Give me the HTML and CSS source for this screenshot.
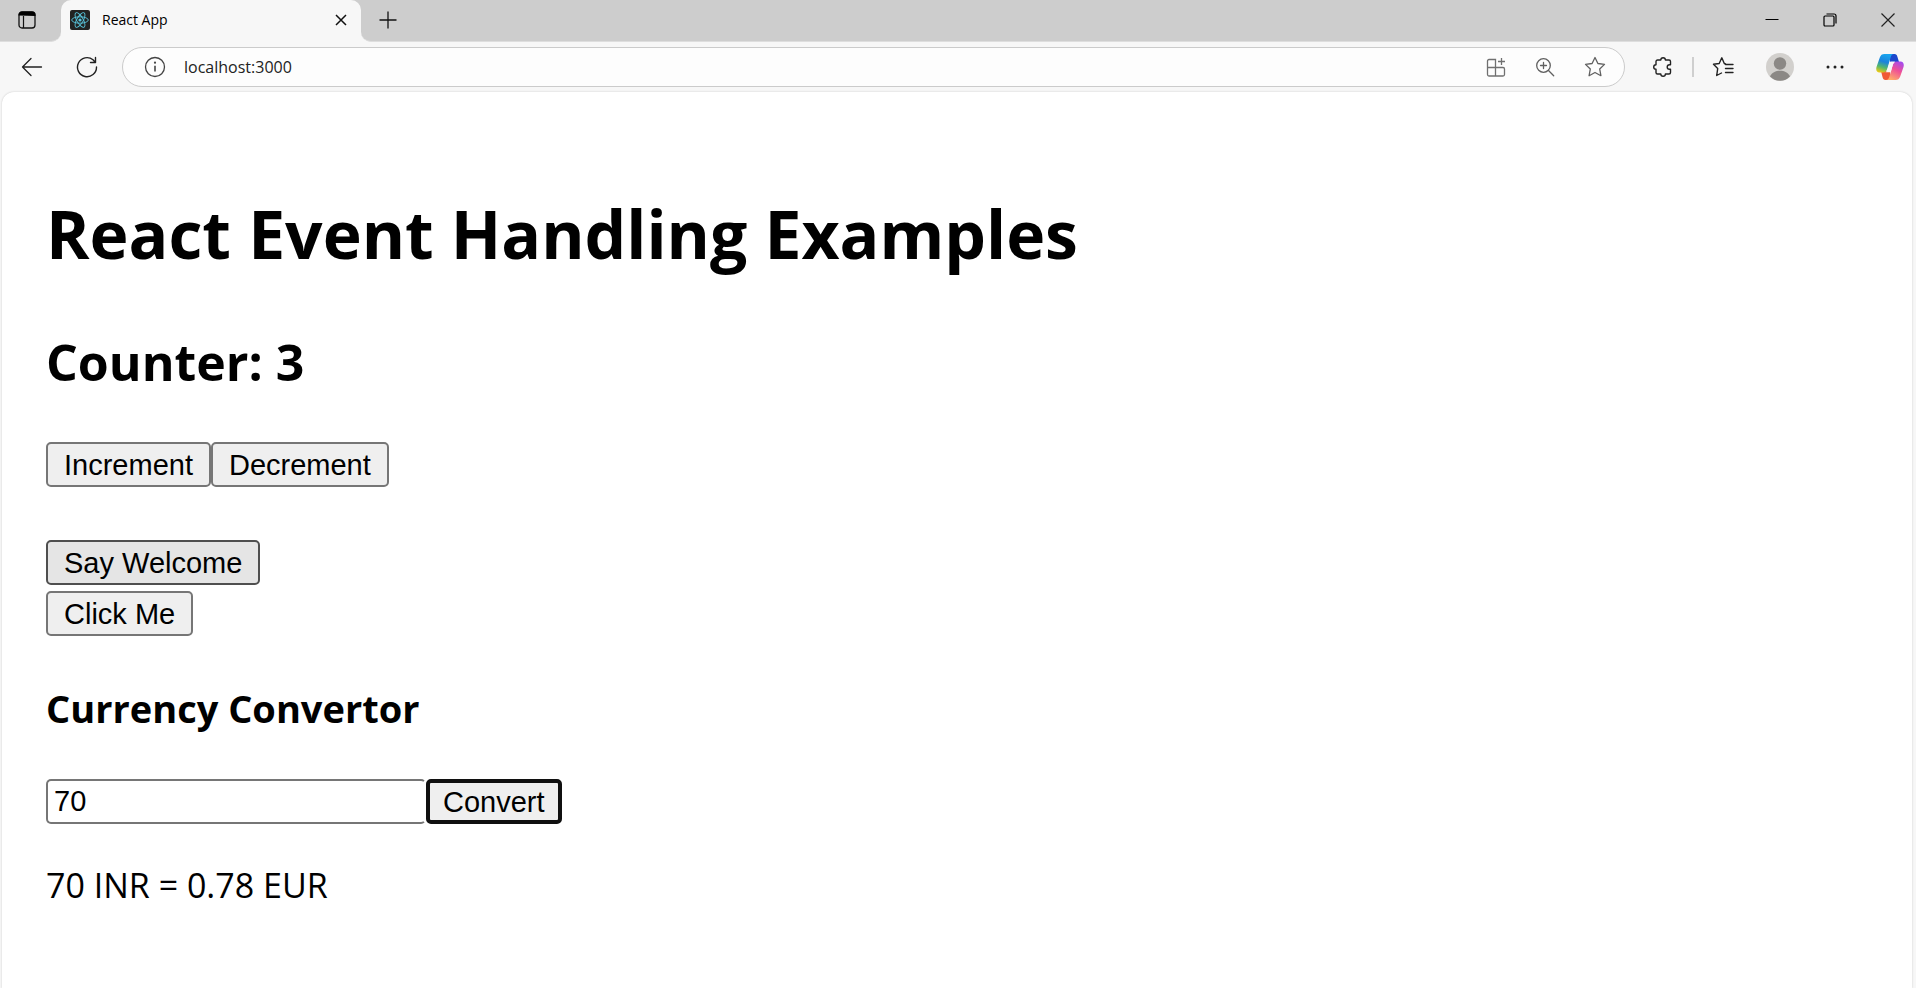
FILE: index.html
```html
<!DOCTYPE html>
<html lang="en">
<head>
<meta charset="utf-8">
<title>React App</title>
<link rel="stylesheet" href="styles.css">
</head>
<body>
<header class="chrome">
  <div class="tabstrip">
    <button class="icon-btn tab-actions" aria-label="Tab actions">
      <svg width="20" height="20" viewBox="0 0 20 20" fill="none" stroke="#111"><rect x="2" y="2" width="16" height="16" rx="3" stroke-width="1.3"/><path d="M1.500 5.500V5A3.500 3.500 0 0 1 5 1.500h10A3.500 3.500 0 0 1 18.500 5v1z" fill="#000" stroke="none"/><path d="M6.500 6v12" stroke-width="1.200"/></svg>
    </button>
    <div class="tab">
      <svg class="favicon" width="20" height="20" viewBox="0 0 20 20" fill="none" stroke="#58c4dc" stroke-width=".9"><rect width="20" height="20" rx="2" fill="#222" stroke="none"/><ellipse cx="10" cy="10" rx="8.300" ry="3.200"/><ellipse cx="10" cy="10" rx="8.300" ry="3.200" transform="rotate(60 10 10)"/><ellipse cx="10" cy="10" rx="8.300" ry="3.200" transform="rotate(120 10 10)"/><circle cx="10" cy="10" r="1.600" fill="#58c4dc" stroke="none"/></svg>
      <span class="tab-title">React App</span>
      <button class="icon-btn tab-close" aria-label="Close tab"><svg width="12" height="12" viewBox="0 0 12 12" stroke="#111" stroke-width="1.500"><path d="M1 1l10 10M11 1L1 11"/></svg></button>
    </div>
    <div class="tab-rest">
      <button class="icon-btn" aria-label="New tab"><svg width="18" height="18" viewBox="0 0 18 18" stroke="#111" stroke-width="1.300"><path d="M9 0.500v17M0.500 9h17"/></svg></button>
      <div class="window-controls">
        <button class="icon-btn" aria-label="Minimize"><svg width="14" height="14" viewBox="0 0 14 14"><path d="M0.500 6.500h13" stroke="#000"/></svg></button>
        <button class="icon-btn" aria-label="Restore"><svg width="14" height="14" viewBox="0 0 14 14" fill="none" stroke="#000" stroke-width="1.200"><rect x="1" y="3" width="10" height="10" rx="1"/><path d="M3.500 1H11a2 2 0 0 1 2 2v7.500"/></svg></button>
        <button class="icon-btn" aria-label="Close"><svg width="14" height="14" viewBox="0 0 14 14" stroke="#222" stroke-width="1.200"><path d="M.5.5l13 13M13.500.5l-13 13"/></svg></button>
      </div>
    </div>
  </div>
  <div class="toolbar">
    <div class="nav">
      <button class="icon-btn" aria-label="Back"><svg width="22" height="20" viewBox="0 0 22 20" fill="none" stroke="#222" stroke-width="1.300" stroke-linecap="round" stroke-linejoin="round"><path d="M20.500 10H1.500M10 1.500L1.500 10l8.500 8.500"/></svg></button>
      <button class="icon-btn" aria-label="Refresh"><svg width="22" height="22" viewBox="0 0 22 22" fill="none" stroke="#222" stroke-width="1.400" stroke-linecap="round" stroke-linejoin="round"><path d="M20.500 11A9.500 9.500 0 1 1 17 3.800L19.500 6.500M19.500 1.500v5h-5"/></svg></button>
    </div>
    <div class="address">
      <svg width="22" height="22" viewBox="0 0 22 22" fill="none" stroke="#444" stroke-width="1.300"><circle cx="11" cy="11" r="9.500"/><path d="M11 9.700V15.500" stroke-width="1.600"/><circle cx="11" cy="6.700" r="1.100" fill="#444" stroke="none"/></svg>
      <input class="url" type="text" aria-label="Address" value="localhost:3000">
      <div class="address-actions">
        <button class="icon-btn" aria-label="Apps"><svg width="20" height="20" viewBox="0 0 20 20" fill="none" stroke="#707070" stroke-width="1.300"><path d="M9.500 10V2.500H3a1.500 1.500 0 0 0-1.500 1.500v13.500A1.500 1.500 0 0 0 3 19h14a1.500 1.500 0 0 0 1.500-1.500V12a1.500 1.500 0 0 0-1.500-1.500H1.500M9.500 10.500V19M15.500 1v7M12 4.500h7"/></svg></button>
        <button class="icon-btn" aria-label="Zoom"><svg width="20" height="20" viewBox="0 0 20 20" fill="none" stroke="#606060" stroke-width="1.300" stroke-linecap="round"><circle cx="8.500" cy="8.500" r="6.800"/><path d="M13.500 13.500l5.200 5.200M8.500 5.500v6M5.500 8.500h6"/></svg></button>
        <button class="icon-btn" aria-label="Favorite"><svg width="22" height="22" viewBox="0 0 22 22" fill="none" stroke="#606060" stroke-width="1.300" stroke-linejoin="round"><path d="M11 1.500l2.900 6 6.600.9-4.800 4.600 1.200 6.700L11 16.500l-5.900 3.200L6.300 13 1.500 8.400l6.600-.9z"/></svg></button>
      </div>
    </div>
    <div class="tools">
      <button class="icon-btn" aria-label="Extensions"><svg width="22" height="22" viewBox="0 0 22 22" fill="none" stroke="#222" stroke-width="1.400" stroke-linejoin="round"><path d="M5.500 4H8.800a2.300 2.300 0 0 1 4.600 0H17a1.500 1.500 0 0 1 1.500 1.500v3.200h-1a2.300 2.300 0 0 0 0 4.600h1v3.200A1.500 1.500 0 0 1 17 18h-3.600a2.300 2.300 0 0 1-4.600 0H5.500A1.500 1.500 0 0 1 4 16.500v-3.200a2.300 2.300 0 0 1 0-4.600V5.500A1.500 1.500 0 0 1 5.500 4z"/></svg></button>
      <span class="divider"></span>
      <button class="icon-btn" aria-label="Favorites list"><svg width="22" height="22" viewBox="0 0 22 22" fill="none" stroke="#222" stroke-width="1.400" stroke-linecap="round" stroke-linejoin="round"><path d="M13.500 8L12.300 7.500 9.800 1.800 7.200 7.500l-5.700.8 4.200 4.300-1 6.900 4.800-2.500M13.500 8.500H21M13.500 12.500H21M13.500 16.500H21"/></svg></button>
      <button class="icon-btn" aria-label="Profile"><svg width="28" height="28" viewBox="0 0 28 28"><circle cx="14" cy="14" r="14" fill="#d2d0cd"/><circle cx="14" cy="10.500" r="6.200" fill="#8b8885"/><path d="M4 23.500C7 15.800 21 15.800 24 23.500A14 14 0 0 1 4 23.500z" fill="#8b8885"/></svg></button>
      <button class="icon-btn" aria-label="Settings and more"><svg width="18" height="6" viewBox="0 0 18 6" fill="#222"><circle cx="2" cy="3" r="1.500"/><circle cx="9" cy="3" r="1.500"/><circle cx="16" cy="3" r="1.500"/></svg></button>
      <button class="icon-btn" aria-label="Copilot"><svg width="28" height="28" viewBox="0 0 28 28">
        <defs>
          <linearGradient id="cool" x1=".5" y1="0" x2=".2" y2="1"><stop offset="0" stop-color="#18a5ee"/><stop offset=".4" stop-color="#1b83dc"/><stop offset=".7" stop-color="#53b86c"/><stop offset="1" stop-color="#f3cb10"/></linearGradient>
          <linearGradient id="warm" x1=".8" y1="0" x2=".3" y2="1"><stop offset="0" stop-color="#a34af0"/><stop offset=".45" stop-color="#ef5097"/><stop offset="1" stop-color="#ffae68"/></linearGradient>
        </defs>
        <path d="M14 1h4.500c1.700 0 2.400 1 2.900 2.700L23 9h-9z" fill="#1c47cc"/>
        <path d="M5 18h9v9h-4.500c-1.700 0-2.400-1-2.900-2.700z" fill="#f05a35"/>
        <path d="M8.500 1H18c-2 0-2.800 1.500-3.400 3.500L11.500 15c-.9 3-1.800 4.500-4.500 4.500H3.500C.7 19.500-.3 17 .5 14L3.800 4.500C4.700 2 6 1 8.500 1z" fill="url(#cool)"/>
        <path d="M19.500 27H10c2 0 2.800-1.500 3.400-3.500L16.500 13c.9-3 1.800-4.500 4.500-4.500h3.500c2.800 0 3.800 2.500 3 5.500l-3.300 9.500c-.9 2.500-2.200 3.500-4.700 3.500z" fill="url(#warm)"/>
        <path d="M15.500 8.500h4c-1.600.6-2.300 2-2.900 4L15 18.200c-.3.800-.7 1-1.500 1h-4c1.300-.7 1.800-2.200 2.400-4.200l1.600-5.200c.3-.9.900-1.300 2-1.300z" fill="#f7f7f7"/>
      </svg></button>
    </div>
  </div>
</header>
<main class="page">
  <h1>React Event Handling Examples</h1>
  <h2>Counter: 3</h2>
  <div class="row"><button class="btn">Increment</button><button class="btn">Decrement</button></div>
  <div class="stack">
    <button class="btn btn-hover">Say Welcome</button>
    <button class="btn">Click Me</button>
  </div>
  <h3>Currency Convertor</h3>
  <form class="row" onsubmit="return false">
    <input class="amount" type="text" aria-label="Amount in INR" value="70"><button class="btn btn-focus">Convert</button>
  </form>
  <p>70 INR = 0.78 EUR</p>
</main>
</body>
</html>
```
FILE: styles.css
```css
* { box-sizing: border-box; }

body {
  margin: 0;
  min-height: 100vh;
  display: flex;
  flex-direction: column;
  background: #f7f7f7;
  color: #000;
  font-family: "Open Sans", "Noto Sans", sans-serif;
}

.icon-btn {
  display: flex;
  align-items: center;
  justify-content: center;
  padding: 0;
  border: 0;
  background: none;
}

/* Tab strip */
.tabstrip {
  display: flex;
  height: 42px;
  background: #cdcdcd;
}

.tab-actions,
.tab-rest {
  background: #cdcdcd;
  border-bottom: 1px solid #dedede;
  box-shadow: 0 10px 0 #f7f7f7;
}

.tab-actions {
  width: 61px;
  padding-right: 7px;
  padding-bottom: 1px;
  border-bottom-right-radius: 10px;
}

.tab {
  display: flex;
  align-items: center;
  width: 300px;
  padding: 0 14px 2px 9px;
  border-radius: 10px 10px 0 0;
  background: #f7f7f7;
}

.tab-title {
  flex: 1;
  margin-left: 12px;
  font-size: 14px;
  line-height: 20px;
}

.tab-rest {
  flex: 1;
  display: flex;
  align-items: center;
  justify-content: space-between;
  padding: 0 21px 2px 18px;
  border-bottom-left-radius: 10px;
}

.window-controls {
  display: flex;
  gap: 44px;
}

/* Toolbar */
.toolbar {
  display: flex;
  align-items: center;
  height: 50px;
  padding: 0 12px 0 21px;
  background: #f7f7f7;
}

.nav {
  display: flex;
  gap: 33px;
  margin-right: 24px;
}

.address {
  flex: 1;
  display: flex;
  align-items: center;
  height: 40px;
  padding: 0 18px 0 21px;
  border: 1px solid #cbcbcb;
  border-radius: 20px;
  background: #fdfdfd;
}

.url {
  flex: 1;
  margin-left: 18px;
  padding: 0;
  border: 0;
  outline: 0;
  background: none;
  color: #222;
  font: 16px/24px "Open Sans", "Noto Sans", sans-serif;
}

.address-actions {
  display: flex;
  align-items: center;
  gap: 29px;
}

.tools {
  display: flex;
  align-items: center;
  margin-left: 27px;
}

.divider {
  width: 2px;
  height: 20px;
  margin: 0 18px;
  background: #cfcfcf;
}

.tools .icon-btn + .icon-btn { margin-left: 32px; }

/* Page content */
.page {
  flex: 1;
  margin: 0 4px 0 2px;
  padding: 94px 44px 44px;
  border-radius: 12px 12px 0 0;
  background: #fff;
  box-shadow: 0 0 2px #c4c4c4;
}

h1 {
  margin: 0 0 47px;
  font-size: 66px;
  line-height: 94px;
}

h2 {
  margin: 0 0 45px;
  font-size: 50px;
  line-height: 70px;
}

h3 {
  margin: 0 0 43px;
  font-size: 38px;
  line-height: 56px;
}

p {
  margin: 37px 0 0;
  font-size: 34px;
  line-height: 48px;
}

.row { display: flex; }

.stack {
  display: flex;
  flex-direction: column;
  align-items: flex-start;
  gap: 6px;
  margin: 53px 0 44px;
}

.btn {
  height: 45px;
  padding: 0 16px;
  border: 2px solid #767676;
  border-radius: 5px;
  background: #efefef;
  color: #000;
  font: 29px/34px "Liberation Sans", Arial, sans-serif;
}

.btn-hover {
  border-color: #4f4f4f;
  background: #e5e5e5;
}

.btn-focus {
  padding: 0 13px;
  border: 4px solid #101010;
}

.amount {
  width: 380px;
  height: 45px;
  padding: 0 6px;
  border: 2px solid #767676;
  border-right-color: transparent;
  border-radius: 5px;
  background: #fff;
  color: #000;
  font: 29px/34px "Liberation Sans", Arial, sans-serif;
}
```
